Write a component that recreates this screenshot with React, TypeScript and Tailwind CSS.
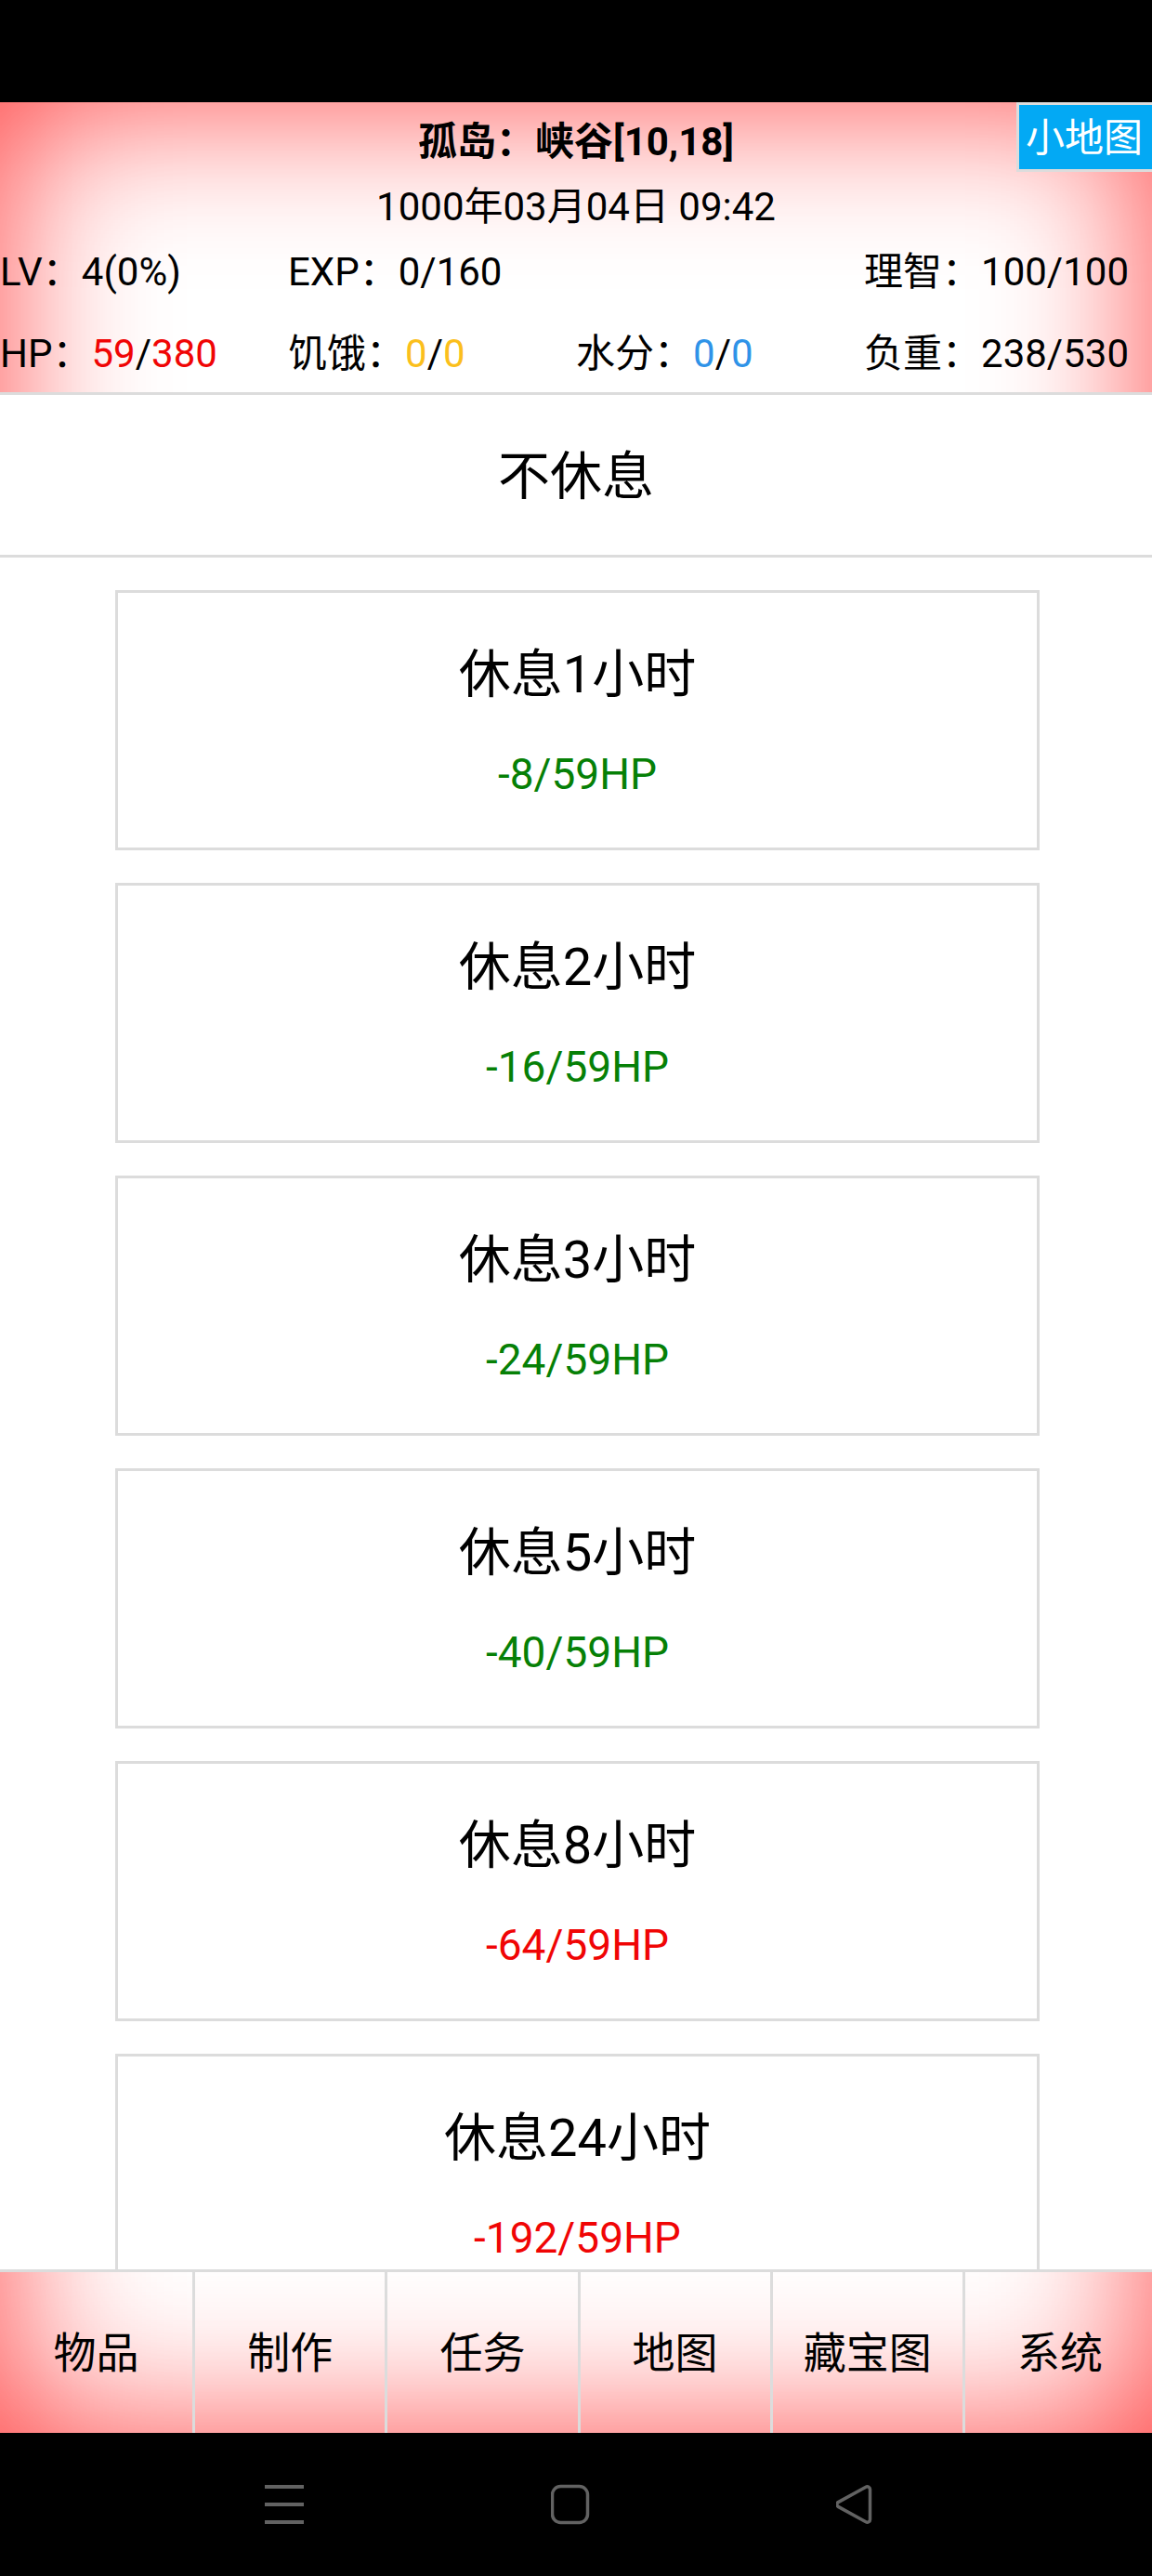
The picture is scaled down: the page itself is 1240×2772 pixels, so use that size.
import type { ReactNode } from "react";

type Option = { title: string; cost: string; tone: string };

const safe = "text-[#068006]";
const deadly = "text-[#f00505]";

const options: Option[] = [
  { title: "休息1小时", cost: "-8/59HP", tone: safe },
  { title: "休息2小时", cost: "-16/59HP", tone: safe },
  { title: "休息3小时", cost: "-24/59HP", tone: safe },
  { title: "休息5小时", cost: "-40/59HP", tone: safe },
  { title: "休息8小时", cost: "-64/59HP", tone: deadly },
  { title: "休息24小时", cost: "-192/59HP", tone: deadly },
];

const tabs = ["物品", "制作", "任务", "地图", "藏宝图", "系统"];

function Stat({ label, children }: { label: string; children: ReactNode }) {
  return (
    <div className="whitespace-nowrap">
      <span>{label}：</span>
      <span>{children}</span>
    </div>
  );
}

function StatusHeader() {
  return (
    <header className="relative pt-[18px] pb-4 text-[42px] leading-[50px]">
      <h1 className="text-center font-bold">孤岛：峡谷[10,18]</h1>
      <p className="mt-5 text-center">1000年03月04日 09:42</p>
      <div className="mt-5 grid grid-cols-4 gap-y-[38px]">
        <Stat label="LV">4(0%)</Stat>
        <Stat label="EXP">0/160</Stat>
        <div />
        <Stat label="理智">100/100</Stat>
        <Stat label="HP">
          <span className="text-[#f00505]">59</span>/<span className="text-[#f00505]">380</span>
        </Stat>
        <Stat label="饥饿">
          <span className="text-[#fbbf1c]">0</span>/<span className="text-[#fbbf1c]">0</span>
        </Stat>
        <Stat label="水分">
          <span className="text-[#2f93e8]">0</span>/<span className="text-[#2f93e8]">0</span>
        </Stat>
        <Stat label="负重">238/530</Stat>
      </div>
      <button
        type="button"
        className="absolute top-0 right-0 h-[75px] border-3 border-r-0 border-[#dcdcdc] bg-[#03a9f4] pt-0.5 pr-[10px] pl-[7px] text-white"
      >
        小地图
      </button>
    </header>
  );
}

function RestOption({ title, cost, tone }: Option) {
  return (
    <button
      type="button"
      className="ml-[10%] block w-[calc(80%+3px)] shrink-0 border-3 border-[#dcdcdc] bg-white pt-[53px] pb-[49px] text-center"
    >
      <span className="block text-[56px] leading-[70px]">{title}</span>
      <span className={"mt-[42px] block text-[46px] leading-[60px] " + tone}>{cost}</span>
    </button>
  );
}

function SystemBar() {
  return (
    <div className="h-[154px] shrink-0 bg-black">
      <div className="ml-[23%] flex h-full w-[53%] items-center justify-between text-[#626262]">
        <button type="button" aria-label="菜单">
          <svg width="42" height="44" viewBox="0 0 42 44" fill="none" stroke="currentColor" strokeWidth="4">
            <path d="M0 3h42M0 22h42M0 41h42" />
          </svg>
        </button>
        <button type="button" aria-label="主页">
          <svg width="42" height="44" viewBox="0 0 42 44" fill="none" stroke="currentColor" strokeWidth="3.5">
            <rect x="1.5" y="2.5" width="38" height="39" rx="9" />
          </svg>
        </button>
        <button type="button" aria-label="返回">
          <svg width="42" height="44" viewBox="0 0 42 44" fill="none" stroke="currentColor" strokeWidth="3.5">
            <path d="M32 3.2 2.2 19.6a2.8 2.8 0 0 0 0 4.8L32 40.8a3 3 0 0 0 4.5-2.6V5.8a3 3 0 0 0-4.5-2.6Z" />
          </svg>
        </button>
      </div>
    </div>
  );
}

export default function App() {
  return (
    <div className="flex h-screen flex-col overflow-hidden bg-black font-[Roboto,'Noto_Sans_CJK_SC',sans-serif] text-black">
      <div className="h-[110px] shrink-0 bg-black" />
      <div className="flex min-h-0 flex-1 flex-col overflow-hidden bg-white shadow-[inset_0_0_168px_rgba(255,0,0,0.75)]">
        <StatusHeader />
        <button
          type="button"
          className="shrink-0 border-y-3 border-[#dcdcdc] bg-white pt-[53px] pb-[49px] text-[56px] leading-[70px]"
        >
          不休息
        </button>
        <main className="flex min-h-0 flex-1 flex-col gap-[35px] overflow-hidden bg-white pt-[35px]">
          {options.map((option) => (
            <RestOption key={option.title} {...option} />
          ))}
        </main>
        <nav className="shrink-0 border-t-3 border-[#dcdcdc]">
          <div className="-mr-[3px] grid grid-cols-6">
            {tabs.map((tab) => (
              <button
                key={tab}
                type="button"
                className="h-[173px] border-l-3 border-[#dcdcdc] pt-0.5 text-[46px] first:border-l-0"
              >
                {tab}
              </button>
            ))}
          </div>
        </nav>
      </div>
      <SystemBar />
    </div>
  );
}
